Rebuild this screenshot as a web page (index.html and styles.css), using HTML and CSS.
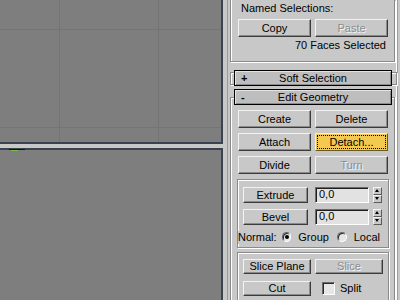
FILE: index.html
```html
<!DOCTYPE html>
<html>

<head>
  <meta name="viewport" content="width=device-width,initial-scale=1.0">
  <title>Edit Mesh</title>
  <link rel="stylesheet" href="styles.css">
</head>

<body>

  <div class="app">
    <div class="views">
      <div class="vp vp-top"></div>
      <div class="vp vp-bottom">
        <div class="gizmo"><span class="gizmo-green"></span></div>
      </div>
    </div>

    <div class="panel">
      <div class="rollouts">

        <div class="rollout named">
          <div class="label">Named Selections:</div>
          <div class="row">
            <button class="btn wide">Copy</button>
            <button class="btn wide" disabled>Paste</button>
          </div>
          <div class="status">70 Faces Selected</div>
        </div>

        <div class="closed">
          <div class="head"><span class="sign">+</span>Soft Selection</div>
        </div>

        <div class="rollout open">
          <div class="head"><span class="sign">-</span>Edit Geometry</div>

          <div class="row first">
            <button class="btn wide">Create</button>
            <button class="btn wide">Delete</button>
          </div>
          <div class="row">
            <button class="btn wide">Attach</button>
            <button class="btn wide active"><span class="focus">Detach...</span></button>
          </div>
          <div class="row">
            <button class="btn wide">Divide</button>
            <button class="btn wide" disabled>Turn</button>
          </div>

          <div class="group">
            <div class="row">
              <button class="btn small">Extrude</button>
              <div class="field">0,0</div>
              <div class="spin"><span class="up"></span><span class="down"></span></div>
            </div>
            <div class="row">
              <button class="btn small">Bevel</button>
              <div class="field">0,0</div>
              <div class="spin"><span class="up"></span><span class="down"></span></div>
            </div>
            <div class="normal">
              <span class="normal-label">Normal:</span>
              <span class="radio checked"></span><span class="radio-text">Group</span>
              <span class="radio"></span><span class="radio-text">Local</span>
            </div>
          </div>

          <div class="group second">
            <div class="row">
              <button class="btn slice">Slice Plane</button>
              <button class="btn slice" disabled>Slice</button>
            </div>
            <div class="row">
              <button class="btn slice">Cut</button>
              <span class="check"></span><span class="check-text">Split</span>
            </div>
          </div>
        </div>

      </div>
      <div class="scroll"></div>
    </div>
  </div>

</body>

</html>
```

FILE: styles.css
```css
* {
  box-sizing: border-box;
}

body {
  margin: 0;
  width: 400px;
  height: 300px;
  overflow: hidden;
  background: #c8c8c8;
  color: #000;
  font: 11px/13px "Liberation Sans", Arial, sans-serif;
}

.app {
  display: flex;
  height: 300px;
}

/* viewports */

.views {
  width: 223px;
  display: flex;
  flex-direction: column;
  gap: 4px;
}

.vp {
  position: relative;
  background-color: #7e7e7e;
  border-right: 2px solid #3a4350;
}

.vp-top {
  height: 144px;
  border-bottom: 2px solid #3a4350;
  background-image: linear-gradient(90deg, #747474 1px, transparent 1px), linear-gradient(#747474 1px, transparent 1px);
  background-size: 99px 98px;
  background-position: 59px 29px;
}

.vp-bottom {
  flex: 1;
  border-top: 2px solid #3a4350;
}

.gizmo {
  position: absolute;
  top: -1px;
  left: 9px;
  width: 16px;
  height: 1px;
  background: #111;
}

.gizmo-green {
  position: absolute;
  top: 1px;
  left: 2px;
  width: 7px;
  height: 1px;
  background: #6fc23a;
}

/* command panel */

.panel {
  flex: 1;
  display: flex;
  margin-left: 4px;
  border-left: 1px solid #9a9a9a;
}

.rollouts {
  width: 168px;
  padding-left: 2px;
}

.scroll {
  flex: 1;
  border-left: 1px solid #fff;
  box-shadow: inset 1px 0 0 #a0a0a0;
}

.rollout {
  width: 165px;
  border: 1px solid #8a8a8a;
  box-shadow: inset 1px 1px 0 #fff, 1px 1px 0 #fff;
}

.named {
  border-top: none;
  box-shadow: inset 1px 0 0 #fff, 1px 1px 0 #fff;
  padding: 2px 6px 9px 7px;
}

.label {
  margin-left: 3px;
}

.status {
  margin-top: 2px;
  padding-right: 2px;
  text-align: right;
}

.row {
  display: flex;
  align-items: center;
  gap: 4px;
  margin-top: 5px;
}

.named .row {
  margin-top: 4px;
}

/* rollup headers */

.closed {
  position: relative;
  height: 16px;
  margin-top: 8px;
}

.closed::before {
  content: "";
  position: absolute;
  left: 0;
  top: 2px;
  width: 165px;
  height: 11px;
  border: 1px solid #8a8a8a;
  box-shadow: inset 1px 1px 0 #fff, 1px 1px 0 #fff;
}

.head {
  position: relative;
  width: 158px;
  height: 16px;
  margin-left: 4px;
  border: 1px solid #000;
  background: #bebebe;
  box-shadow: inset 1px 1px 0 #e4e4e4, inset -1px -1px 0 #8c8c8c;
  text-align: center;
  line-height: 14px;
}

.sign {
  position: absolute;
  left: 6px;
  top: 0;
  font-weight: bold;
}

.open {
  display: flex;
  flex-direction: column;
  margin-top: 11px;
  height: 203px;
  border-bottom: none;
  box-shadow: inset 1px 1px 0 #fff, 1px 0 0 #fff;
  padding: 0 6px 0 7px;
}

.open .head {
  margin: -9px 0 0 -4px;
}

.open .row.first {
  margin-top: 5px;
}

/* buttons */

.btn {
  height: 18px;
  padding: 0;
  font: 11px/13px "Liberation Sans", Arial, sans-serif;
  color: #000;
  background: #c8c8c8;
  border: 1px solid;
  border-color: #f2f2f2 #3c3c3c #3c3c3c #f2f2f2;
  box-shadow: inset -1px -1px 0 #8a8a8a;
}

.btn:disabled {
  color: #8c8c8c;
  text-shadow: 1px 1px 0 #f4f4f4;
}

.wide {
  width: 73px;
}

.active {
  background: #f3c94f;
  border-color: #fbeec0 #6a5a2a #6a5a2a #fbeec0;
  box-shadow: none;
  padding: 1px;
}

.focus {
  display: block;
  height: 100%;
  border: 1px dotted #000;
  line-height: 12px;
}

/* group boxes */

.group {
  width: 152px;
  margin: 5px 0 0 -1px;
  padding: 1px 0 3px 5px;
  border: 1px solid #8a8a8a;
  box-shadow: inset 1px 1px 0 #fff, 1px 1px 0 #fff;
}

.group.second {
  flex: 1;
  margin-top: 4px;
  padding-top: 0;
  border-bottom: none;
  box-shadow: inset 1px 1px 0 #fff, 1px 0 0 #fff;
}

.group .row {
  margin-top: 6px;
  gap: 0;
}

.group.second .row + .row {
  margin-top: 7px;
}

.small {
  width: 65px;
  height: 16px;
}

.field {
  width: 54px;
  height: 16px;
  margin-left: 7px;
  padding-left: 3px;
  background: #e2e2e2;
  border: 1px solid;
  border-color: #6a6a6a #fff #fff #6a6a6a;
  box-shadow: inset 1px 1px 0 #1e1e1e;
  line-height: 13px;
}

.spin {
  width: 9px;
  height: 16px;
  margin-left: 4px;
  display: flex;
  flex-direction: column;
}

.spin span {
  flex: 1;
  position: relative;
  border: 1px solid;
  border-color: #f2f2f2 #5a5a5a #5a5a5a #f2f2f2;
}

.spin span::after {
  content: "";
  position: absolute;
  left: 1px;
  top: 1px;
  border: 2.5px solid transparent;
}

.spin .up::after {
  top: -1px;
  border-bottom: 3px solid #000;
}

.spin .down::after {
  top: 1px;
  border-top: 3px solid #000;
}

.normal {
  display: flex;
  align-items: center;
  height: 14px;
  margin: 5px 0 0 -5px;
}

.normal-label {
  background: #c8c8c8;
  padding-right: 5px;
}

.radio {
  width: 10px;
  height: 10px;
  border-radius: 50%;
  background: #e6e6e6;
  border: 1px solid;
  border-color: #6a6a6a #fff #fff #6a6a6a;
  box-shadow: inset 1px 1px 0 #2a2a2a;
  position: relative;
}

.radio.checked::after {
  content: "";
  position: absolute;
  left: 2px;
  top: 2px;
  width: 4px;
  height: 4px;
  border-radius: 50%;
  background: #000;
}

.radio-text {
  margin: 0 8px 0 7px;
}

.slice {
  width: 68px;
  height: 15px;
}

.slice + .slice {
  margin-left: 4px;
}

.check {
  width: 13px;
  height: 13px;
  margin-left: 11px;
  background: #e6e6e6;
  border: 1px solid;
  border-color: #6a6a6a #fff #fff #6a6a6a;
  box-shadow: inset 1px 1px 0 #2a2a2a;
}

.check-text {
  margin-left: 5px;
}
```
